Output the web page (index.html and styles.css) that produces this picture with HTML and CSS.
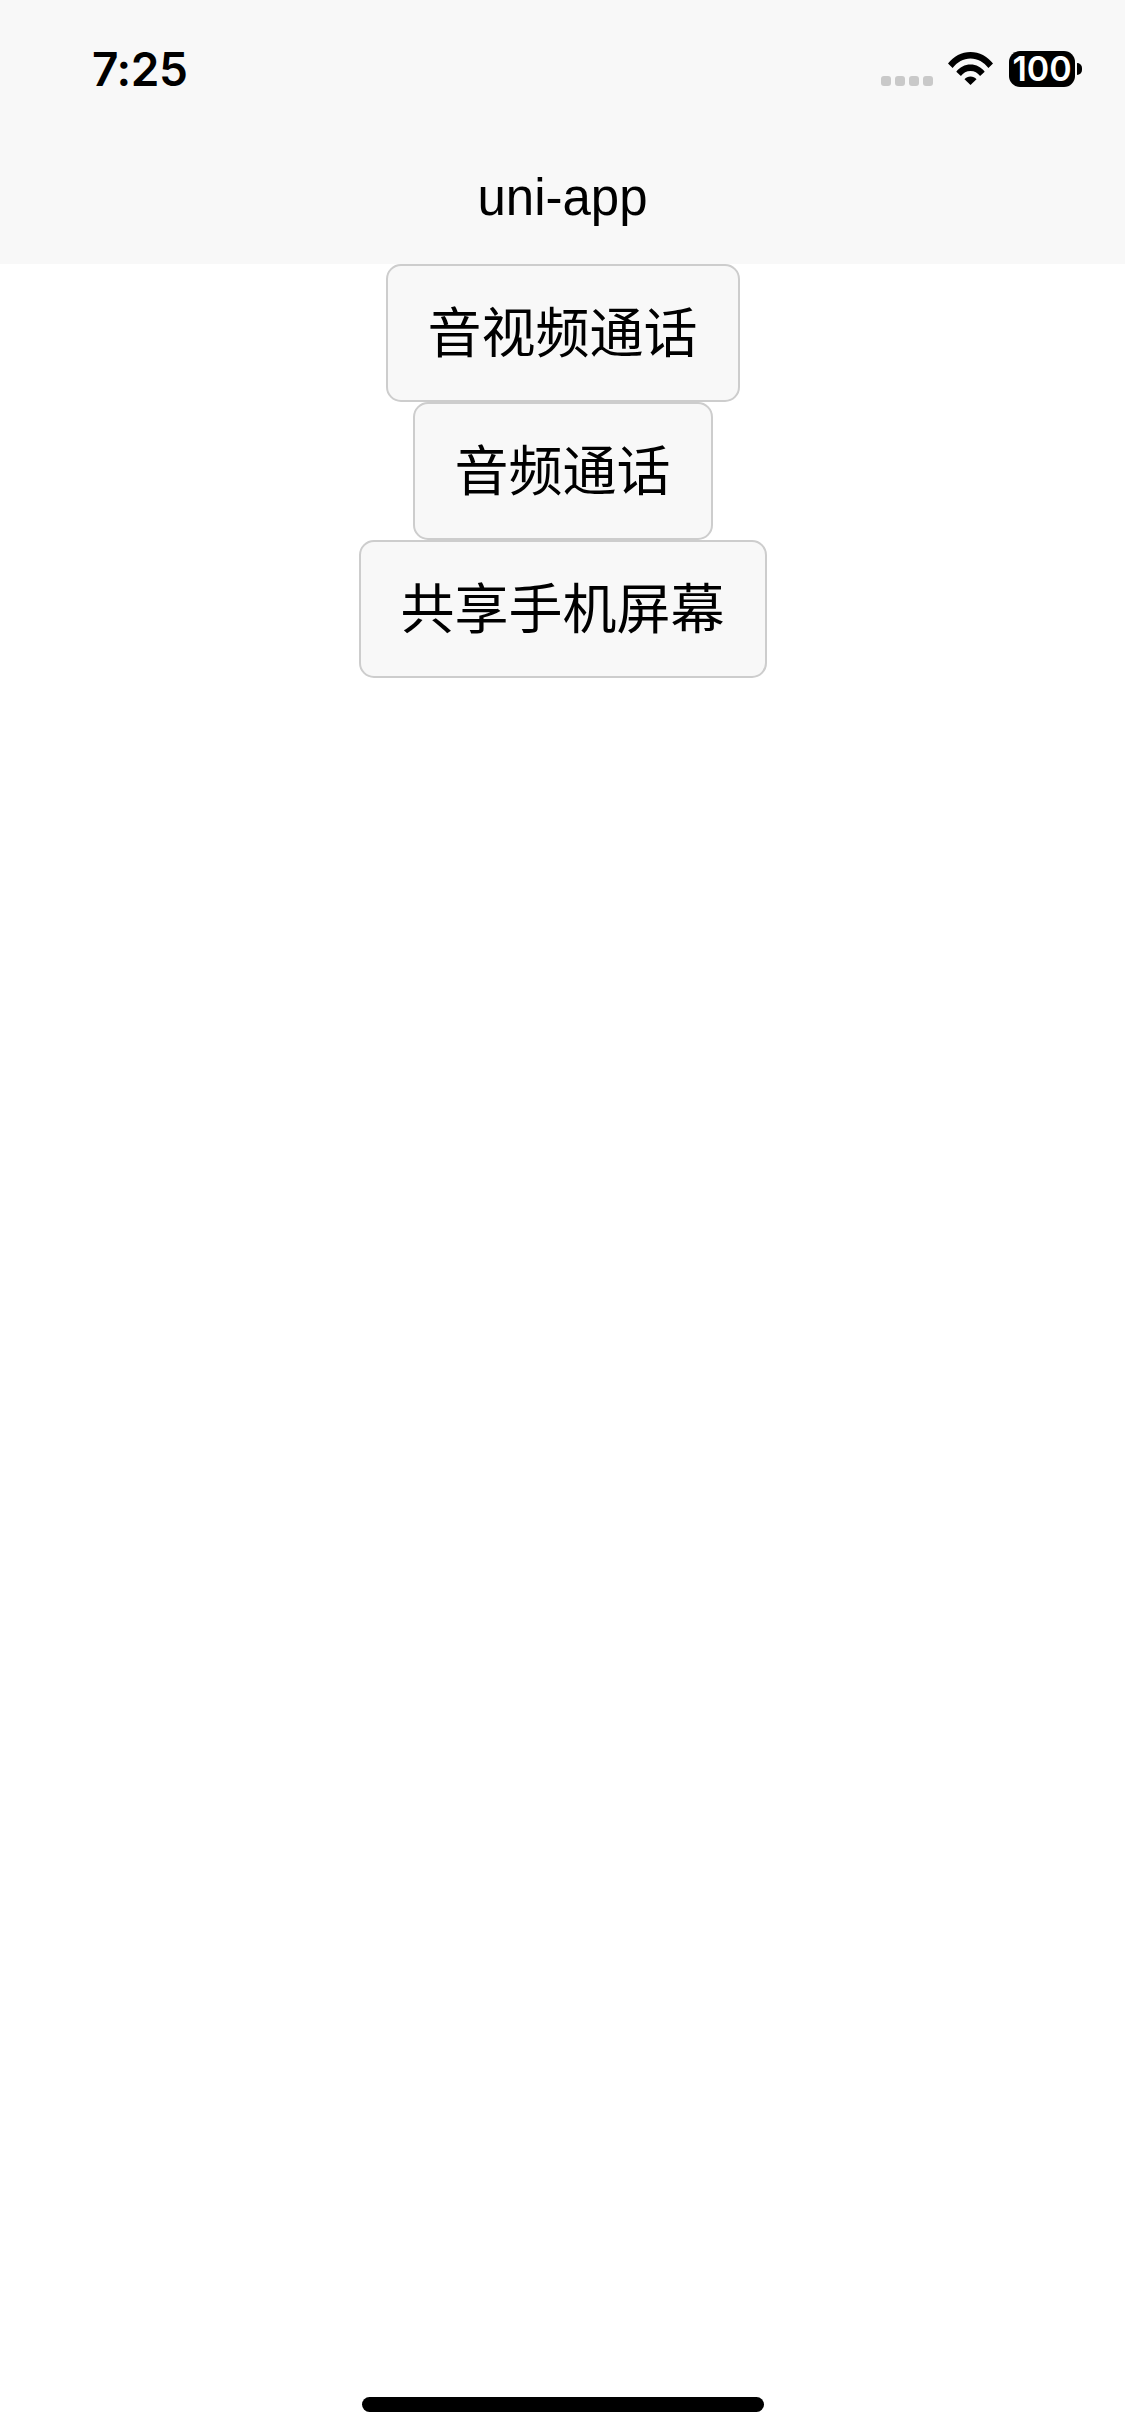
FILE: index.html
```html
<!DOCTYPE html>
<html lang="zh">
<head>
<meta charset="utf-8">
<title>uni-app</title>
<link rel="stylesheet" href="styles.css">
</head>
<body>
<div class="page">
  <header class="header">
    <div class="status-bar">
      <span class="time">7:25</span>
      <div class="status-icons">
        <div class="signal"><i></i><i></i><i></i><i></i></div>
        <svg class="wifi" viewBox="0 0 45 33" aria-hidden="true">
          <path d="M0 11.6C5.6 4.4 13.6 0 22.5 0S39.4 4.4 45 11.6l-4.6 4.4C35.9 10 29.6 6.4 22.5 6.4S9.1 10 4.600 16Z"/>
          <path d="M8.300 19.700C11.700 15.300 16.800 12.600 22.500 12.600S33.300 15.300 36.700 19.700L32.100 24.100C29.800 21 26.400 19.100 22.500 19.100S15.200 21 12.900 24.100Z"/>
          <path d="M16.500 27.300C18 25.500 20.100 24.500 22.500 24.500S27 25.500 28.500 27.300L22.500 33Z"/>
        </svg>
        <div class="battery">
          <span class="battery-body">100</span>
          <span class="battery-nub"></span>
        </div>
      </div>
    </div>
    <div class="nav-title">uni-app</div>
  </header>
  <main class="main">
    <button class="btn" type="button">音视频通话</button>
    <button class="btn" type="button">音频通话</button>
    <button class="btn" type="button">共享手机屏幕</button>
  </main>
  <div class="home-indicator"></div>
</div>
</body>
</html>
```

FILE: styles.css
```css
* {
  box-sizing: border-box;
}

html,
body {
  margin: 0;
  padding: 0;
  background: #fff;
}

.page {
  display: flex;
  flex-direction: column;
  width: 1125px;
  height: 2436px;
  overflow: hidden;
  font-family: "Liberation Sans", "Noto Sans CJK SC", sans-serif;
  color: #000;
}

.header {
  height: 264px;
  flex: none;
  background: #f8f8f8;
}

.status-bar {
  display: flex;
  justify-content: space-between;
  align-items: flex-start;
  height: 132px;
  padding: 0 43px 0 92px;
}

.time {
  margin-top: 41px;
  font-family: Inter, sans-serif;
  font-size: 46px;
  font-weight: 600;
  letter-spacing: -0.4px;
  line-height: 56px;
}

.status-icons {
  display: flex;
  align-items: flex-start;
  padding-top: 51px;
}

.signal {
  display: flex;
  gap: 4px;
  margin-top: 25px;
  margin-right: 15px;
}

.signal i {
  display: block;
  width: 10px;
  height: 10px;
  border-radius: 3px;
  background: #c9c9c9;
}

.wifi {
  display: block;
  width: 45px;
  height: 33px;
  margin-top: 1px;
  margin-right: 16px;
  fill: #000;
}

.battery {
  display: flex;
  align-items: center;
  height: 36px;
}

.battery-body {
  display: block;
  width: 66px;
  height: 36px;
  border-radius: 11px;
  background: #000;
  color: #fff;
  font-family: Inter, sans-serif;
  font-size: 34px;
  font-weight: 600;
  line-height: 36px;
  text-align: center;
}

.battery-nub {
  display: block;
  width: 5px;
  height: 12px;
  margin-left: 2px;
  border-radius: 0 6px 6px 0;
  background: #000;
}

.nav-title {
  height: 132px;
  padding-top: 3px;
  font-size: 51px;
  line-height: 126px;
  text-align: center;
}

.main {
  display: flex;
  flex: 1;
  flex-direction: column;
  align-items: center;
}

.btn {
  display: block;
  height: 138px;
  padding: 2px 40px 0;
  border: 2px solid #cdcdcd;
  border-radius: 15px;
  background: #f8f8f8;
  color: #000;
  font-family: "Liberation Sans", "Noto Sans CJK SC", sans-serif;
  font-size: 54px;
  line-height: 132px;
  white-space: nowrap;
}

.home-indicator {
  flex: none;
  align-self: center;
  width: 402px;
  height: 15px;
  margin-bottom: 24px;
  border-radius: 8px;
  background: #000;
}
```
